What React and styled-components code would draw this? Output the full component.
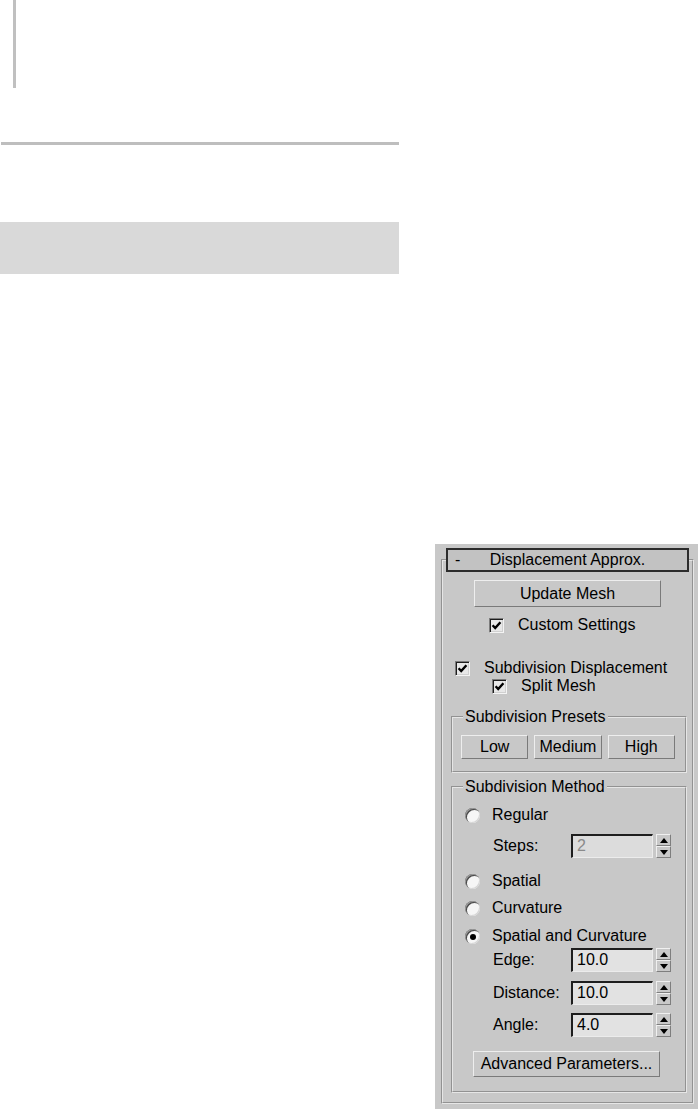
import React from "react";
import styled, { createGlobalStyle } from "styled-components";

const Global = createGlobalStyle`
  html, body { margin: 0; padding: 0; background: #ffffff; overflow: hidden; }
  body { font-family: "Liberation Sans", Arial, sans-serif; }
`;

const Page = styled.div`
  display: flex;
  flex-direction: column;
  align-items: flex-start;
  width: 698px;
  height: 1109px;
`;

const MarginRule = styled.div`
  margin-left: 13px;
  width: 3px;
  height: 88px;
  background: #c0c0c0;
`;

const HRule = styled.div`
  margin-top: 54px;
  margin-left: 1px;
  width: 398px;
  height: 3px;
  background: #bebebe;
`;

const Banner = styled.div`
  margin-top: 77px;
  width: 399px;
  height: 52px;
  background: #d9d9d9;
`;

const Panel = styled.div`
  margin-top: 270px;
  margin-left: 435px;
  width: 263px;
  flex: 1;
  box-sizing: border-box;
  background: #c8c8c8;
  padding: 4px 0 0 6px;
  font-size: 16px;
  color: #000;
`;

const Rollout = styled.fieldset`
  margin: 0;
  padding: 0 0 9px 0;
  min-inline-size: 0;
  width: 253px;
  box-sizing: border-box;
  border: 2px groove #e6e6e6;
`;

const TitleLegend = styled.legend`
  margin-left: 3px;
  padding: 0;
`;

const TitleBar = styled.div`
  width: 243px;
  height: 24px;
  box-sizing: border-box;
  border: 2px solid #2c2c2c;
  background: #c2c2c2;
  display: grid;
  grid-template-columns: 30px 1fr 30px;
  align-items: center;
  line-height: 18px;
`;

const Minus = styled.span`
  padding-left: 7px;
`;

const TitleText = styled.span`
  text-align: center;
`;

const Body = styled.div`
  display: flex;
  flex-direction: column;
  align-items: flex-start;
`;

const PushButton = styled.button`
  font: 16px "Liberation Sans", Arial, sans-serif;
  color: #000;
  background: #c8c8c8;
  box-sizing: border-box;
  height: ${(p) => p.$h || 24}px;
  width: ${(p) => (p.$w ? `${p.$w}px` : "auto")};
  flex: ${(p) => (p.$w ? "none" : "1")};
  margin: ${(p) => p.$mt || 0}px 0 0 ${(p) => p.$ml || 0}px;
  padding: 0;
  border: 1px solid;
  border-color: #eeeeee #7a7a7a #7a7a7a #eeeeee;
  white-space: nowrap;
`;

const Row = styled.div`
  display: flex;
  align-items: center;
  height: 18px;
  line-height: 18px;
  margin-top: ${(p) => p.$mt || 0}px;
  margin-left: ${(p) => p.$ml || 0}px;
  gap: ${(p) => p.$gap || 14}px;
  white-space: nowrap;
`;

const CheckBox = styled.span`
  width: 15px;
  height: 15px;
  box-sizing: border-box;
  flex: none;
  background: #e8e8e8;
  border: 1px solid;
  border-color: #7c7c7c #f4f4f4 #f4f4f4 #7c7c7c;
  box-shadow: inset 1px 1px 0 #1e1e1e, inset -1px -1px 0 #d0d0d0;
  display: flex;
  align-items: center;
  justify-content: center;
`;

const RadioDot = styled.span`
  position: relative;
  width: 15px;
  height: 15px;
  border-radius: 50%;
  box-sizing: border-box;
  flex: none;
  background: #f6f6f6;
  box-shadow: inset 1px 1px 0 #9a9a9a, inset 2px 2px 0 #4a4a4a,
    inset -1px -1px 0 #d6d6d6;
  &::after {
    content: "";
    display: ${(p) => (p.$on ? "block" : "none")};
    position: absolute;
    left: 5px;
    top: 5px;
    width: 6px;
    height: 6px;
    border-radius: 50%;
    background: #000;
  }
`;

const Group = styled.fieldset`
  margin: ${(p) => p.$mt || 0}px 0 0 8px;
  padding: ${(p) => p.$pad};
  min-inline-size: 0;
  width: 236px;
  box-sizing: border-box;
  border: 2px groove #e6e6e6;
`;

const GroupLegend = styled.legend`
  margin-left: ${(p) => p.$lm}px;
  padding: 0 2px;
  line-height: 18px;
  white-space: nowrap;
`;

const PresetRow = styled.div`
  display: flex;
  gap: 6px;
`;

const MethodBody = styled.div`
  display: flex;
  flex-direction: column;
  align-items: flex-start;
`;

const FieldRow = styled.div`
  display: flex;
  align-items: center;
  margin-top: ${(p) => p.$mt || 0}px;
  margin-left: 28px;
`;

const FieldLabel = styled.span`
  width: 78px;
  line-height: 18px;
`;

const Field = styled.div`
  width: 82px;
  height: 24px;
  box-sizing: border-box;
  background: ${(p) => (p.$disabled ? "#dcdcdc" : "#e2e2e2")};
  color: ${(p) => (p.$disabled ? "#8a8a8a" : "#000")};
  border-style: solid;
  border-width: 2px 1px 1px 2px;
  border-color: #1e1e1e #ececec #ececec #1e1e1e;
  padding-left: 4px;
  line-height: 20px;
`;

const Spinner = styled.div`
  display: flex;
  flex-direction: column;
  width: 15px;
  height: 24px;
  margin-left: 3px;
`;

const SpinHalf = styled.div`
  flex: 1;
  display: flex;
  align-items: center;
  justify-content: center;
  box-sizing: border-box;
  background: #c8c8c8;
  border: 1px solid;
  border-color: #f0f0f0 #7e7e7e #7e7e7e #f0f0f0;
  &::after {
    content: "";
    width: 0;
    height: 0;
    border-left: 4px solid transparent;
    border-right: 4px solid transparent;
    ${(p) =>
      p.$down ? "border-top: 5px solid #000;" : "border-bottom: 5px solid #000;"}
  }
`;

const CheckMark = () => (
  <svg width="11" height="11" viewBox="0 0 11 11">
    <path d="M1.6 5.2 L4.2 8 L9.4 2.2" fill="none" stroke="#000" strokeWidth="2.4" />
  </svg>
);

const Check = ({ label, mt, ml }) => (
  <Row $mt={mt} $ml={ml}>
    <CheckBox>
      <CheckMark />
    </CheckBox>
    <span>{label}</span>
  </Row>
);

const Radio = ({ label, on, mt }) => (
  <Row $mt={mt} $gap={12}>
    <RadioDot $on={on} />
    <span>{label}</span>
  </Row>
);

const Spin = ({ label, value, disabled, mt }) => (
  <FieldRow $mt={mt}>
    <FieldLabel>{label}</FieldLabel>
    <Field $disabled={disabled}>{value}</Field>
    <Spinner>
      <SpinHalf />
      <SpinHalf $down />
    </Spinner>
  </FieldRow>
);

export default function App() {
  return (
    <>
      <Global />
      <Page>
        <MarginRule />
        <HRule />
        <Banner />
        <Panel>
          <Rollout>
            <TitleLegend>
              <TitleBar>
                <Minus>-</Minus>
                <TitleText>Displacement Approx.</TitleText>
                <span />
              </TitleBar>
            </TitleLegend>
            <Body>
              <PushButton $mt={8} $ml={31} $w={187} $h={27}>
                Update Mesh
              </PushButton>
              <Check label="Custom Settings" mt={9} ml={46} />
              <Check label="Subdivision Displacement" mt={25} ml={12} />
              <Check label="Split Mesh" mt={0} ml={49} />
              <Group $mt={13} $pad="9px 10px 12px 8px">
                <GroupLegend $lm={2}>Subdivision Presets</GroupLegend>
                <PresetRow>
                  <PushButton>Low</PushButton>
                  <PushButton>Medium</PushButton>
                  <PushButton>High</PushButton>
                </PresetRow>
              </Group>
              <Group $mt={5} $pad="10px 0 14px 12px">
                <GroupLegend $lm={-2}>Subdivision Method</GroupLegend>
                <MethodBody>
                  <Radio label="Regular" />
                  <Spin label="Steps:" value="2" disabled mt={10} />
                  <Radio label="Spatial" mt={14} />
                  <Radio label="Curvature" mt={9} />
                  <Radio label="Spatial and Curvature" on mt={10} />
                  <Spin label="Edge:" value="10.0" mt={3} />
                  <Spin label="Distance:" value="10.0" mt={9} />
                  <Spin label="Angle:" value="4.0" mt={8} />
                  <PushButton $mt={14} $ml={8} $w={187} $h={26}>
                    Advanced Parameters...
                  </PushButton>
                </MethodBody>
              </Group>
            </Body>
          </Rollout>
        </Panel>
      </Page>
    </>
  );
}
